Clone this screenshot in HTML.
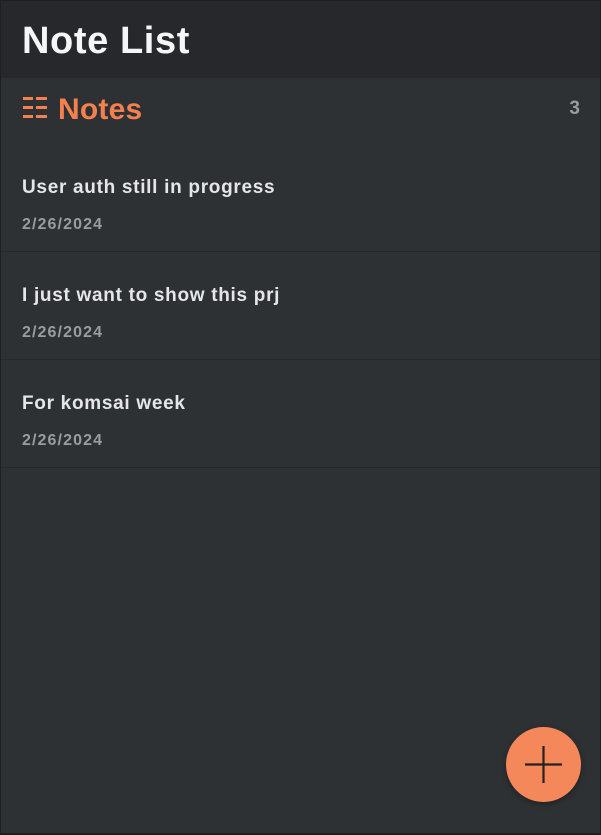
<!DOCTYPE html>
<html><head><style>
html,body{margin:0;padding:0}
body{width:601px;height:835px;background:#1e1f21;font-family:"Liberation Sans",sans-serif;overflow:hidden;position:relative}
.wrap{position:absolute;left:1px;top:1px;width:599px;height:832px;background:#2e3134}
.hdr{height:77px;background:#26282b;color:#f5f6f8;font-weight:bold;font-size:38px;padding-left:21px;line-height:80px;letter-spacing:0.6px}
.sec{position:relative;height:66px}
.sec .t{position:absolute;left:57px;top:15px;color:#f5804f;font-weight:bold;font-size:30px;letter-spacing:0.2px}
.sec .c{position:absolute;right:20px;top:20px;color:#9a9c9e;font-weight:bold;font-size:19px}
.item{height:107px;border-bottom:1px solid #26282b;position:relative}
.item .a{position:absolute;left:21px;top:33px;color:#e6e6e8;font-weight:bold;font-size:19px;letter-spacing:0.7px}
.item .d{position:absolute;left:21px;top:72px;color:#9a9c9e;font-weight:bold;font-size:16px;letter-spacing:1.1px}
.fab{position:absolute;left:506px;top:727px;width:75px;height:75px;border-radius:50%;background:#f5885a;box-shadow:0 2px 6px rgba(0,0,0,.35)}
</style></head><body><div class="wrap">
<div class="hdr">Note List</div>
<div class="sec">
<svg style="position:absolute;left:22px;top:19px" width="24" height="22" viewBox="0 0 24 22" fill="#f5804f">
<rect x="0" y="0" width="10" height="3"/><rect x="13" y="0" width="11" height="3"/>
<rect x="0" y="9" width="10" height="3"/><rect x="13" y="9" width="11" height="3"/>
<rect x="0" y="18" width="10" height="3"/><rect x="13" y="18" width="11" height="3"/>
</svg>
<div class="t">Notes</div><div class="c">3</div></div>
<div class="item"><div class="a">User auth still in progress</div><div class="d">2/26/2024</div></div>
<div class="item"><div class="a">I just want to show this prj</div><div class="d">2/26/2024</div></div>
<div class="item"><div class="a">For komsai week</div><div class="d">2/26/2024</div></div>
</div>
<div class="fab"><svg width="75" height="75" viewBox="0 0 75 75"><path d="M37.5 19V56M19 37.5H56" stroke="#222" stroke-width="2.2"/></svg></div>
</body></html>
